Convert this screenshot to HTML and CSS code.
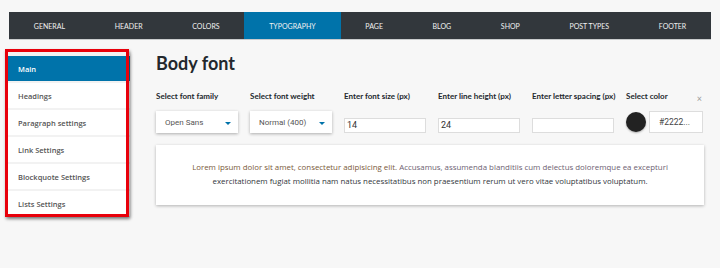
FILE: index.html
```html
<!DOCTYPE html>
<html>
<head>
<meta charset="utf-8">
<link rel="stylesheet" href="styles.css">
</head>
<body>
<nav class="tabs">
  <a class="tab">GENERAL</a>
  <a class="tab">HEADER</a>
  <a class="tab">COLORS</a>
  <a class="tab active">TYPOGRAPHY</a>
  <a class="tab">PAGE</a>
  <a class="tab">BLOG</a>
  <a class="tab">SHOP</a>
  <a class="tab">POST TYPES</a>
  <a class="tab">FOOTER</a>
</nav>
<div class="layout">
  <aside class="sidebar">
    <ul class="menu">
      <li class="item active">Main</li>
      <li class="item">Headings</li>
      <li class="item">Paragraph settings</li>
      <li class="item">Link Settings</li>
      <li class="item">Blockquote Settings</li>
      <li class="item">Lists Settings</li>
    </ul>
    <div class="highlight"></div>
  </aside>
  <main class="content">
    <h1 class="title">Body font</h1>
    <div class="fields">
      <div class="field">
        <label class="label">Select font family</label>
        <div class="select"><span>Open Sans</span><i class="caret"></i></div>
      </div>
      <div class="field">
        <label class="label">Select font weight</label>
        <div class="select"><span>Normal (400)</span><i class="caret"></i></div>
      </div>
      <div class="field">
        <label class="label">Enter font size (px)</label>
        <div class="input">14</div>
      </div>
      <div class="field">
        <label class="label">Enter line height (px)</label>
        <div class="input">24</div>
      </div>
      <div class="field">
        <label class="label">Enter letter spacing (px)</label>
        <div class="input"></div>
      </div>
      <div class="field color-field">
        <label class="label">Select color</label>
        <span class="close">×</span>
        <div class="color-row">
          <span class="swatch"></span>
          <div class="hex">#2222...</div>
        </div>
      </div>
    </div>
    <div class="preview">
      <p class="sample"><span class="s1">Lorem ipsum dolor sit amet, consectetur adipisicing elit.</span> <span class="s2">Accusamus, assumenda blanditiis cum delectus doloremque ea excepturi</span><br>exercitationem fugiat mollitia nam natus necessitatibus non praesentium rerum ut vero vitae voluptatibus voluptatum.</p>
    </div>
  </main>
</div>
</body>
</html>
```
FILE: styles.css
```css
* { box-sizing: border-box; }
html, body { margin: 0; padding: 0; }
body {
  background: #f7f7f7;
  font-family: Lato, "Open Sans", sans-serif;
  width: 720px;
  height: 268px;
  overflow: hidden;
}
.tabs {
  display: flex;
  margin: 12px 9px 0;
  height: 28px;
  background: #32373c;
  border-bottom: 1px solid #c9cbcd;
}
.tab {
  flex: 1 1 auto;
  display: flex;
  align-items: center;
  justify-content: center;
  color: #f1f1f1;
  font-size: 7px;
  line-height: 1;
  padding-top: 1px;
}
.tab.active { background: #0073aa; }
.layout {
  display: flex;
  gap: 26px;
  padding: 12px 16px 0 8px;
}
.sidebar {
  position: relative;
  width: 122px;
  flex: none;
}
.menu {
  list-style: none;
  margin: 0;
  padding: 4px 0 0;
  background: #f2f2f2;
  box-shadow: 1px 2px 3px rgba(0,0,0,0.15);
  display: flex;
  flex-direction: column;
  gap: 2px;
}
.item {
  height: 25px;
  background: #fff;
  color: #555;
  font-family: "Open Sans", sans-serif;
  font-weight: 600;
  font-size: 7.5px;
  display: flex;
  align-items: center;
  padding-left: 10px;
}
.item.active { background: #0073aa; color: #fff; }
.highlight {
  position: absolute;
  left: -3px;
  top: -3px;
  width: 124px;
  height: 168px;
  border: 3px solid #e8000b;
  box-shadow: 1px 2px 3px rgba(0,0,0,0.45);
}
.content {
  flex: 1;
  min-width: 0;
}
.title {
  margin: 0;
  font-size: 18px;
  font-weight: 700;
  color: #23282d;
  line-height: 22px;
}
.fields {
  display: grid;
  grid-template-columns: repeat(5, 82px) 78px;
  column-gap: 12px;
  margin-top: 17px;
}
.field {
  display: flex;
  flex-direction: column;
  position: relative;
}
.label {
  font-size: 8px;
  font-weight: 700;
  color: #23282d;
  line-height: 10px;
  height: 10px;
  white-space: nowrap;
}
.select {
  margin-top: 10px;
  height: 22px;
  background: #fff;
  box-shadow: 0 1px 3px rgba(0,0,0,0.3);
  display: flex;
  align-items: center;
  justify-content: space-between;
  padding: 0 7px 0 9px;
  font-family: Roboto, sans-serif;
  font-size: 8px;
  color: #555;
}
.caret {
  width: 0;
  height: 0;
  border-left: 3px solid transparent;
  border-right: 3px solid transparent;
  border-top: 3px solid #0073aa;
  margin-top: 2px;
}
.input {
  margin-top: 17px;
  height: 15px;
  background: #fff;
  border: 1px solid #ddd;
  font-family: Roboto, sans-serif;
  font-size: 9px;
  color: #333;
  padding-left: 2px;
  line-height: 13px;
}
.close {
  position: absolute;
  right: 2px;
  top: 3px;
  font-size: 9px;
  color: #999;
  line-height: 1;
}
.color-row {
  margin-top: 10px;
  display: flex;
  align-items: center;
  gap: 3px;
}
.swatch {
  width: 20px;
  height: 20px;
  border-radius: 50%;
  background: #222;
  box-shadow: 0 1px 2px rgba(0,0,0,0.3);
  flex: none;
}
.hex {
  width: 54px;
  height: 22px;
  border: 1px solid #ddd;
  background: #fff;
  font-family: Roboto, sans-serif;
  font-size: 8.5px;
  color: #444;
  display: flex;
  align-items: center;
  padding-left: 9px;
}
.preview {
  margin-top: 12px;
  height: 60px;
  background: #fff;
  box-shadow: 0 1px 3px rgba(0,0,0,0.28);
  display: flex;
  align-items: center;
  justify-content: center;
}
.sample {
  margin: 0;
  font-family: "Open Sans", sans-serif;
  font-size: 7.88px;
  line-height: 14.5px;
  color: #32373c;
  text-align: center;
  white-space: nowrap;
  padding-bottom: 2px;
}
.s1 { color: #7a5a3a; }
.s2 { color: #6d6272; }
```
